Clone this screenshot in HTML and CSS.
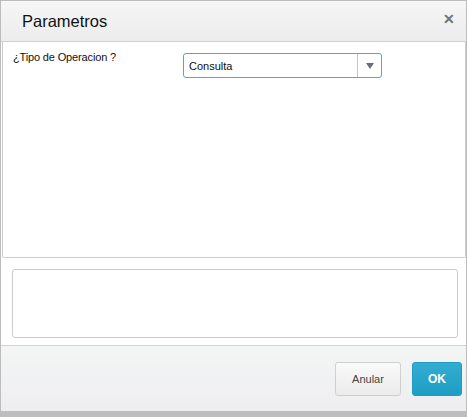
FILE: index.html
```html
<!DOCTYPE html>
<html>
<head>
  <meta charset="utf-8" />
  <title>Parametros</title>
  <link rel="stylesheet" href="styles.css">
</head>
<body>
  <div class="dialog">
    <div class="dialog-header">
      <h2>Parametros</h2>
      <button class="close" title="Cerrar">&#x2715;</button>
    </div>

    <div class="dialog-body">
      <div class="field">
        <label>¿Tipo de Operacion ?</label>
        <div class="select">
          <span class="select-value">Consulta</span>
          <span class="select-arrow"></span>
        </div>
      </div>
    </div>

    <div class="notes">
      <div class="notes-box"></div>
    </div>

    <div class="dialog-footer">
      <button class="btn btn-cancel">Anular</button>
      <button class="btn btn-ok">OK</button>
    </div>
  </div>
</body>
</html>
```

FILE: styles.css
```css
body {
  margin: 0;
  font-family: 'Liberation Sans', Arial, sans-serif;
  color: #222;
  background: #fff;
}
.dialog {
  box-sizing: border-box;
  width: 467px;
  height: 417px;
  border: 1px solid #bcbcbc;
  border-bottom: 6px solid #bdbdbd;
  display: flex;
  flex-direction: column;
  background: #fff;
}
.dialog-header {
  height: 40px;
  flex: none;
  display: flex;
  align-items: center;
  justify-content: space-between;
  padding: 0 11px 0 21px;
  background: linear-gradient(#f6f6f6, #ececec);
  border-bottom: 1px solid #cfcfcf;
}
.dialog-header h2 {
  margin: 0;
  font-size: 16.5px;
  font-weight: normal;
  color: #111;
  padding-top: 1px;
}
.close {
  border: none;
  background: none;
  padding: 0;
  font-size: 14px;
  font-weight: bold;
  color: #70747c;
  cursor: pointer;
  margin-top: -4px;
}
.dialog-body {
  box-sizing: border-box;
  height: 216px;
  flex: none;
  margin-left: 1px;
  border: 1px solid #cdcdcd;
  border-top: none;
  border-radius: 0 0 2px 2px;
  padding: 9px 10px;
}
.field {
  display: flex;
  align-items: flex-start;
}
.field label {
  width: 170px;
  font-size: 11px;
  letter-spacing: -0.15px;
  color: #111;
}
.select {
  box-sizing: border-box;
  width: 199px;
  height: 25px;
  margin-top: 2px;
  display: flex;
  border: 1px solid #3fb0d2;
  border-radius: 3px;
}
.select-value {
  flex: 1;
  font-size: 11px;
  color: #111;
  padding: 6px 0 0 5px;
}
.select-arrow {
  width: 23px;
  border-left: 1px solid #c4c4c4;
  display: flex;
  align-items: center;
  justify-content: center;
}
.select-arrow::after {
  content: "";
  border-left: 4px solid transparent;
  border-right: 4px solid transparent;
  border-top: 6px solid #6a6e78;
  margin-top: 1px;
}
.notes {
  flex: 1;
  padding: 11px 8px 7px 11px;
}
.notes-box {
  box-sizing: border-box;
  height: 69px;
  border: 1px solid #cbcbcb;
  border-radius: 3px;
}
.dialog-footer {
  height: 65px;
  flex: none;
  display: flex;
  justify-content: flex-end;
  align-items: center;
  gap: 11px;
  padding: 0 4px;
  border-top: 1px solid #d2d2d2;
  background: linear-gradient(#f4f5f5, #eeeef0);
}
.btn {
  height: 34px;
  font-family: inherit;
  font-size: 11px;
  border-radius: 3px;
  cursor: pointer;
}
.btn-cancel {
  width: 66px;
  color: #444;
  border: 1px solid #cfcfcf;
  background: linear-gradient(#fafafa, #ebebeb);
}
.btn-ok {
  width: 50px;
  color: #fff;
  font-weight: bold;
  font-size: 12px;
  border: 1px solid #1d9dc1;
  background: linear-gradient(#33acd1, #1e9ec4);
}
```
